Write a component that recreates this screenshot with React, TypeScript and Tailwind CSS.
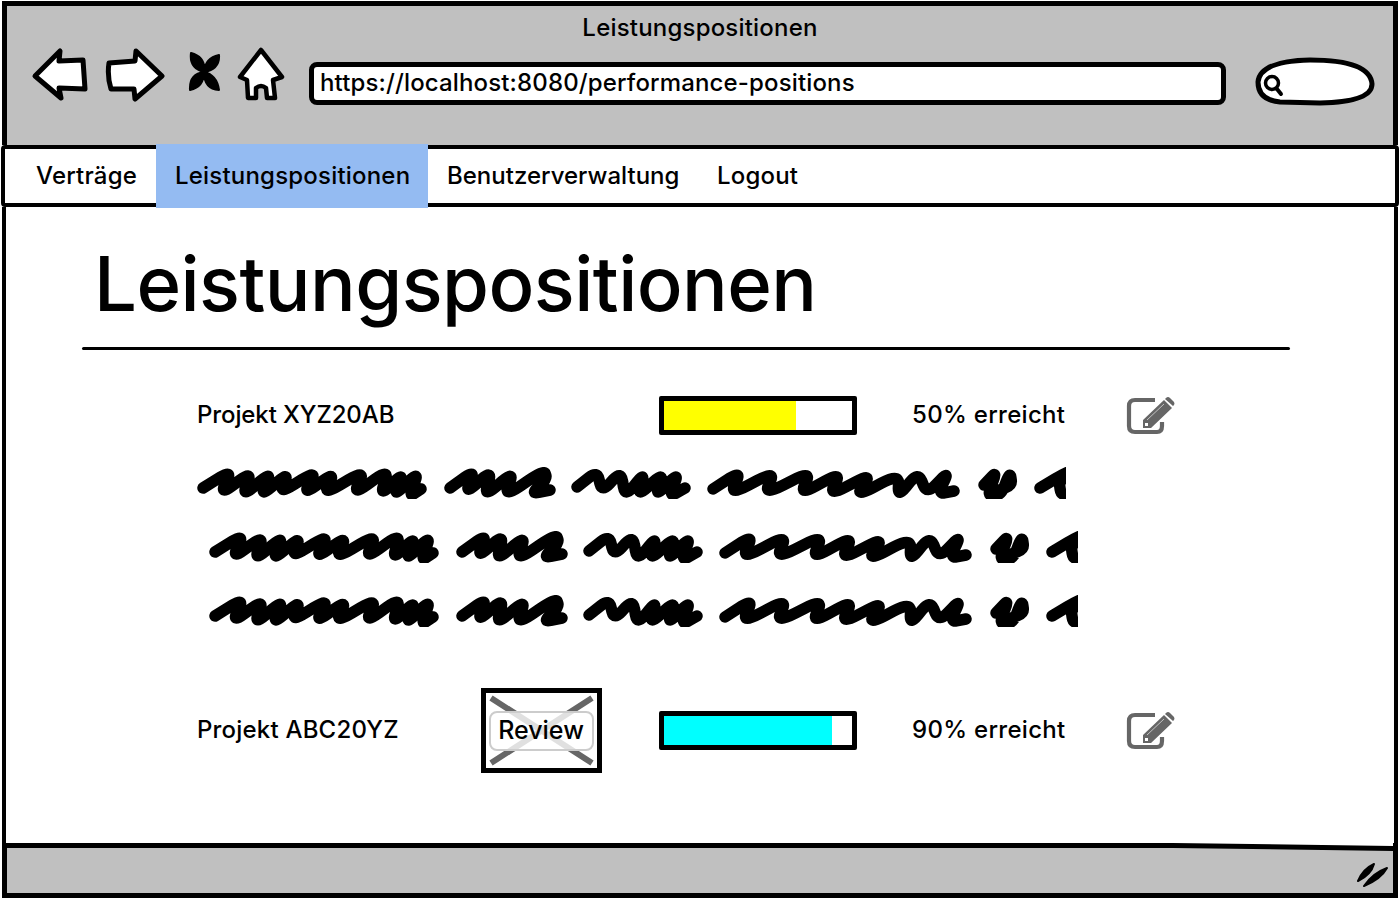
import React from "react";

type P = [number, number];
const line = (pts: P[]) => {
  let d = `M${pts[0][0]} ${pts[0][1]}`;
  for (let i = 1; i < pts.length - 1; i++) {
    const [px, py] = pts[i - 1];
    const [x, y] = pts[i];
    const [nx, ny] = pts[i + 1];
    d += ` L${x + (px - x) * 0.4} ${y + (py - y) * 0.4}`;
    d += ` Q${x} ${y} ${x + (nx - x) * 0.4} ${y + (ny - y) * 0.4}`;
  }
  const l = pts[pts.length - 1];
  return d + ` L${l[0]} ${l[1]}`;
};

const WORDS: P[][] = [
  [[6,21],[35,3],[23,28],[55,4],[45,30],[75,4],[63,30],[92,5],[82,27],[120,3],[106,28],[138,5],[126,28],[168,3],[156,28],[192,2],[183,29],[207,5],[196,30],[222,4],[212,30],[224,22]],
  [[253,21],[278,3],[268,27],[295,3],[287,30],[317,4],[307,30],[347,3],[350,12],[334,27],[353,23]],
  [[380,20],[400,4],[405,25],[424,4],[428,30],[448,5],[440,30],[467,5],[458,30],[482,5],[472,30],[488,21]],
  [[516,22],[544,4],[533,28],[578,4],[567,28],[614,4],[603,28],[644,5],[632,29],[675,6],[658,30],[702,7],[701,30],[721,5],[730,27],[752,4],[741,27],[757,24]],
  [[787,18],[800,4],[790,29],[804,28],[813,5],[815,18],[800,24]],
  [[843,21],[868,6],[878,3],[862,14],[864,28],[880,28]],
];

function Scribble() {
  return (
    <svg width="869" height="32" viewBox="0 0 869 32" className="block">
      {WORDS.map((w, i) => (
        <path key={i} d={line(w)} fill="none" stroke="#000" strokeWidth="11.5" strokeLinecap="round" strokeLinejoin="round" />
      ))}
    </svg>
  );
}

function Bar({ fill, w }: { fill: string; w: string }) {
  return (
    <div className="h-[39px] w-[198px] border-[5px] border-black bg-white rounded-[2px]">
      <div className={`h-full ${fill} ${w}`} />
    </div>
  );
}

function Edit() {
  return (
    <svg width="49" height="39" viewBox="0 0 49 39" className="block">
      <path d="M29 4 H9 Q3 4 3 10 V30 Q3 36 9 36 H31 Q36 36 36 30 V26" fill="none" stroke="#666" strokeWidth="4.2" />
      <path d="M17 32 L17 24 L38 4 L46 12 L25 32 Z M40 2 Q42 0 44 2 L48 6 Q49 8 48 9 L47 10 L39 3 Z" fill="#666" />
      <path d="M21 24 L38 8" stroke="#d8d8d8" strokeWidth="0.8" />
      <path d="M19 27 L22 27 L22 30 L19 30 Z" fill="#fff" />
    </svg>
  );
}

const tab = "flex items-center";

export default function App() {
  return (
    <div className="w-[1400px] h-[900px] bg-white overflow-hidden relative text-black font-['Inter','Liberation_Sans',sans-serif] font-medium">
      <header className="h-[144px] mx-[2px] mt-[1px] border-[5px] border-b-0 border-black bg-[#c0c0c0]">
        <div className="h-[40px] flex items-center justify-center text-[24px] tracking-[0.2px] pt-[3px]">Leistungspositionen</div>
        <div className="flex items-center h-[63px] pl-[24px]">
          <svg width="58" height="56" viewBox="30 46 58 56" className="block shrink-0 -mt-[5px]">
            <path d="M34 75 L59 50 L58 60 L82 59 L84 88 L58 87 L60 97 Z" fill="#fff" stroke="#000" strokeWidth="5" strokeLinejoin="round" />
          </svg>
          <svg width="62" height="56" viewBox="104 46 62 56" className="block shrink-0 ml-[16px] -mt-[5px]">
            <path d="M108 62 L134 60 L135 50 L161 75 L134 98 L133 88 L110 88 Q106 75 108 62 Z" fill="#fff" stroke="#000" strokeWidth="5" strokeLinejoin="round" />
          </svg>
          <svg width="34" height="44" viewBox="186 48 34 44" className="block shrink-0 ml-[20px] -mt-[13px]">
            <path d="M203 71 Q188 67 190 52 Q205 56 203 71 Z M203 71 Q204 57 218 54 Q219 68 203 71 Z M203 71 Q188 73 189 89 Q203 86 203 71 Z M203 71 Q216 74 218 89 Q203 88 203 71 Z" fill="#000" stroke="#000" strokeWidth="2" strokeLinejoin="round" />
          </svg>
          <svg width="48" height="56" viewBox="236 46 48 56" className="block shrink-0 ml-[16px] -mt-[5px]">
            <path d="M260 49 L281 76 L272 79 L274 97 L266 97 L265 87 Q260 83 255 87 L255 97 L247 97 L246 79 L239 76 Z" fill="#fff" stroke="#000" strokeWidth="4.5" strokeLinejoin="round" />
          </svg>
          <div className="ml-[24px] mt-[11px] w-[917px] h-[43px] border-[5px] border-black bg-white rounded-[8px] flex items-center pl-[6px] pb-[1px] text-[24px] tracking-[0.14px]">
            https://localhost:8080/performance-positions
          </div>
          <svg width="122" height="54" viewBox="1254 55 122 54" className="block shrink-0 ml-[28px] mt-[8px]">
            <path d="M1258 82 Q1260 61 1310 60 Q1370 60 1372 84 Q1372 102 1320 103 L1280 102 Q1258 100 1258 82 Z" fill="#fff" stroke="#000" strokeWidth="5" />
            <circle cx="1272" cy="83" r="6.5" fill="none" stroke="#000" strokeWidth="3.5" />
            <path d="M1277 89 L1281 94" stroke="#000" strokeWidth="4" strokeLinecap="round" />
          </svg>
        </div>
      </header>

      <nav className="h-[62px] mx-[1px] border-[4px] border-black rounded-[4px] bg-white relative flex items-center text-[24px] tracking-[0.2px]">
        <div className={`${tab} pl-[31px] pr-[19px] w-[151px] shrink-0`}>Verträge</div>
        <div className={`${tab} px-[19px] bg-[#94bbf2] h-[64px] w-[272px] shrink-0`}>Leistungspositionen</div>
        <div className={`${tab} pl-[19px] w-[289px] shrink-0 tracking-[0px]`}>Benutzerverwaltung</div>
        <div className={tab}>Logout</div>
      </nav>

      <main className="h-[636px] mx-[2px] border-x-[4px] border-black pt-[26px] bg-white">
        <h1 className="text-[76px] leading-[100px] pl-[88px] font-medium tracking-[-0.55px]">Leistungspositionen</h1>
        <div className="ml-[76px] mt-[14px] w-[1208px] h-[3px] bg-black rounded-full" />
        <div className="pl-[191px] mt-[46px]">
          <div className="grid grid-cols-[462px_253px_214px_auto] items-center text-[24px] h-[39px]">
            <div className="tracking-[-0.1px] -mt-[2px]">Projekt XYZ20AB</div>
            <Bar fill="bg-[#ffff00]" w="w-[132px]" />
            <div className="tracking-[0.3px] -mt-[2px]">50% erreicht</div>
            <Edit />
          </div>
          <div className="mt-[32px] flex flex-col gap-[32px]">
            <Scribble />
            <div className="pl-[12px]"><Scribble /></div>
            <div className="pl-[12px]"><Scribble /></div>
          </div>
          <div className="mt-[61px] grid grid-cols-[284px_178px_253px_214px_auto] items-center text-[24px] h-[85px]">
            <div className="tracking-[0.2px] -mt-[2px]">Projekt ABC20YZ</div>
            <div className="relative w-[121px] h-[85px] border-[5px] border-black bg-white flex items-center justify-center">
              <svg width="111" height="75" viewBox="0 0 111 75" className="absolute inset-0">
                <path d="M5 5 L106 70 M106 5 L5 70" stroke="#666" strokeWidth="6" />
              </svg>
              <div className="relative w-[105px] h-[40px] -ml-[1px] rounded-[8px] border-2 border-[#cccccc] bg-white/80 flex items-center justify-center text-[25px]">Review</div>
            </div>
            <Bar fill="bg-[#00ffff]" w="w-[168px]" />
            <div className="tracking-[0.3px] -mt-[2px]">90% erreicht</div>
            <Edit />
          </div>
        </div>
      </main>

      <footer className="h-[55px] mx-[2px] border-[5px] border-black bg-[#c0c0c0] relative">
        <svg width="220" height="8" viewBox="0 0 220 8" className="absolute right-0 -top-[5px]">
          <path d="M0 5 L220 8 L220 5 Z" fill="#000" />
          <path d="M0 0 L220 3 L220 0 Z" fill="#fff" />
        </svg>
        <svg width="40" height="32" viewBox="0 0 40 32" className="absolute right-0 bottom-0">
          <path d="M5 20 Q10 8 21 3 Q18 14 5 20 Z M11 25 Q20 12 34 7 Q28 18 11 25 Z" fill="#000" stroke="#000" strokeWidth="2" strokeLinejoin="round" />
        </svg>
      </footer>
    </div>
  );
}
